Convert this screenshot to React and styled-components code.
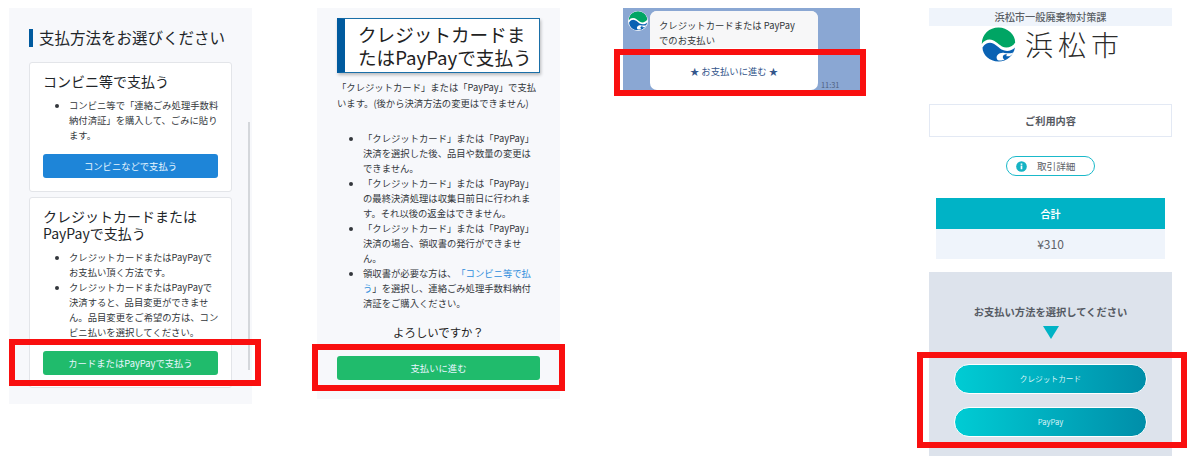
import styled, { createGlobalStyle } from "styled-components"

const Global = createGlobalStyle`
  html, body { margin:0; padding:0; background:#fff; height:460px; overflow:hidden; }
  body {
    font-family:"Noto Sans CJK JP","Noto Sans",sans-serif;
    color:#212529;
    text-spacing-trim:space-all;
    text-autospace:no-autospace;
  }
  * { box-sizing:border-box; }
`
const Page = styled.div`
  display:flex;
  align-items:flex-start;
  width:1189px;
  height:460px;
  padding:8px 0 0 9px;
  overflow:hidden;
`
const Shot = styled.section`
  position:relative;
  flex:none;
  width:243px;
  height:${p => p.$h}px;
  margin-right:${p => p.$gap || 0}px;
  background:${p => p.$bg || "transparent"};
`
const Highlight = styled.div`
  position:absolute;
  left:${p => p.$l}px;
  top:${p => p.$t}px;
  width:${p => p.$w}px;
  height:${p => p.$h}px;
  border:6px solid #f90f0f;
  z-index:3;
`
const Inner = styled.div`
  padding:${p => p.$pad};
`
const Heading = styled.h2`
  margin:0 0 15px;
  height:18px;
  padding-left:6px;
  border-left:4px solid #005a9e;
  font-size:15.5px;
  line-height:17px;
  font-weight:400;
  white-space:nowrap;
`
const Card = styled.div`
  width:203px;
  height:${p => p.$h}px;
  margin-bottom:5px;
  padding:10px 13px 0;
  background:#fff;
  border:1px solid #e3e5e9;
  border-radius:3px;
`
const CardTitle = styled.h3`
  margin:0 0 8px;
  font-size:14px;
  line-height:17px;
  font-weight:400;
`
const List = styled.ul`
  margin:0 ${p => p.$right}px 0 0;
  padding-left:${p => p.$indent}px;
  font-size:9.33px;
  line-height:15px;
  color:#33373b;
  list-style:disc;
`
const Btn = styled.div`
  display:flex;
  align-items:center;
  justify-content:center;
  height:24px;
  margin-top:${p => p.$mt || 0}px;
  border-radius:3px;
  background:${p => p.$color};
  color:#e8f6ff;
  font-size:9.33px;
`
const Scrollbar = styled.div`
  position:absolute;
  left:239px;
  top:114px;
  width:2px;
  height:248px;
  background:#d4d7db;
`
const TitleBox = styled.h1`
  margin:0 0 6px;
  width:203px;
  height:55px;
  padding:3px 0 0 13px;
  background:#fff;
  border:1px solid #1a6fa8;
  border-left:8px solid #005a9e;
  box-shadow:1px 2px 3px rgba(0,0,0,.25);
  font-size:18.6px;
  line-height:23px;
  font-weight:400;
  color:#222;
`
const Lead = styled.p`
  margin:0 0 20px;
  font-size:9.33px;
  line-height:16px;
  color:#33373b;
`
const Link = styled.span`
  color:#2e8ddb;
`
const Ask = styled.p`
  margin:13px 0 16px;
  text-align:center;
  font-size:11.4px;
  line-height:16px;
  color:#222;
`
const Chat = styled.div`
  display:flex;
  align-items:flex-start;
  gap:2px;
  width:237px;
  height:82px;
  padding:3px 0 0 5px;
  background:#8aa7d3;
`
const Avatar = styled.svg`
  flex:none;
  width:20px;
  height:20px;
  border-radius:50%;
  background:#fff;
`
const Bubble = styled.div`
  width:168px;
  height:79px;
  border-radius:7px;
  overflow:hidden;
  background:#fff;
`
const BubbleText = styled.div`
  height:37px;
  padding:7px 0 0 9px;
  background:#f7f7f8;
  font-size:9.33px;
  line-height:15px;
  color:#33373b;
`
const BubbleAction = styled.div`
  padding-top:16px;
  text-align:center;
  font-size:9.33px;
  line-height:14px;
  color:#34568b;
`
const Time = styled.span`
  align-self:flex-end;
  margin:0 0 1px 1px;
  font-size:7.4px;
  line-height:9px;
  color:#4e6180;
`
const Banner = styled.div`
  height:18px;
  background:#eff4fb;
  text-align:center;
  font-size:10.2px;
  line-height:18px;
  font-weight:500;
  color:#5a5f66;
`
const LogoRow = styled.div`
  display:flex;
  align-items:center;
  justify-content:center;
  gap:9px;
  height:36px;
  margin-bottom:42px;
  padding-right:1px;
`
const LogoText = styled.span`
  font-size:28px;
  line-height:36px;
  font-weight:300;
  letter-spacing:5px;
  margin-right:-5px;
  color:#2b2b2b;
`
const UsageBox = styled.div`
  height:33px;
  border:1px solid #e3e9f4;
  text-align:center;
  font-size:10.2px;
  line-height:31px;
  font-weight:700;
  color:#55595f;
`
const PillRow = styled.div`
  display:flex;
  justify-content:center;
  margin:19px 0 22px;
`
const Pill = styled.div`
  display:flex;
  align-items:center;
  gap:10px;
  width:89px;
  height:20px;
  padding-left:9px;
  border:1.5px solid #1ab9ca;
  border-radius:10px;
  font-size:9.6px;
  color:#5d6167;
`
const Total = styled.div`
  margin:0 7px 13px;
`
const TotalHead = styled.div`
  height:31px;
  background:#00b3c6;
  color:#fff;
  text-align:center;
  font-size:10px;
  line-height:31px;
  font-weight:700;
`
const TotalBody = styled.div`
  height:30px;
  background:#eff4fb;
  text-align:center;
  font-size:12px;
  line-height:30px;
  color:#5d6167;
`
const PayPanel = styled.div`
  height:184px;
  padding:33px 25px 0;
  background:#dde3ec;
`
const PayLabel = styled.p`
  margin:0 0 7px;
  text-align:center;
  font-size:10.27px;
  line-height:14px;
  font-weight:700;
  color:#555a63;
  white-space:nowrap;
`
const Arrow = styled.div`
  width:0;
  height:0;
  margin:0 auto 25px;
  border-left:8.5px solid transparent;
  border-right:8.5px solid transparent;
  border-top:13px solid #00b3c6;
`
const PayBtn = styled.div`
  height:30px;
  margin-bottom:13px;
  border:1px solid #fff;
  border-radius:15px;
  background:linear-gradient(90deg,#00ccd4,#008ea9);
  color:#d8f3f6;
  text-align:center;
  font-size:7.7px;
  line-height:28px;
`

const CityMark = ({ size }) => (
  <svg width={size} height={size} viewBox="0 0 34 35" aria-hidden="true">
    <path d="M0.3 17C0.3 7 8 0.5 17 0.5C26 0.5 33.7 7.5 33.7 15.5C31 20 25 22 20.5 19.5C16 16.5 13 12.5 8 12.5C5 12.5 2 14 0.3 17Z" fill="#00a564" />
    <path d="M1 20.5C3 17 6 15.8 8.5 15.8C13 15.8 16 20 20 22.5C25 25 30 24 33.5 20.5C32 28.5 25.5 34.5 17 34.5C8 34.5 1 28 1 20.5Z" fill="#0a62b3" />
    <path d="M16 33C13 29 18 25 23 26C26 26.5 29 26.5 32 25.5C30 29 27 30 24.5 29C26 28 26 27 23.5 27.5C21 28 20.5 31 23 32.5C21 33.5 18 34 16 33Z" fill="#fff" />
  </svg>
)

const App = () => {
  return (
    <>
      <Global />
      <Page>
        <Shot $h={396} $gap={65} $bg="#f7f8fb">
          <Inner $pad="21px 0 0 20px">
            <Heading>支払方法をお選びください</Heading>
            <Card $h={130}>
              <CardTitle>コンビニ等で支払う</CardTitle>
              <List $indent={26} $right={-2}>
                <li>コンビニ等で「連絡ごみ処理手数料納付済証」を購入して、ごみに貼ります。</li>
              </List>
              <Btn $color="#1e85d8" $mt={11}>コンビニなどで支払う</Btn>
            </Card>
            <Card $h={191}>
              <CardTitle>クレジットカードまたはPayPayで支払う</CardTitle>
              <List $indent={26} $right={-2}>
                <li>クレジットカードまたはPayPayでお支払い頂く方法です。</li>
                <li>クレジットカードまたはPayPayで決済すると、品目変更ができません。品目変更をご希望の方は、コンビニ払いを選択してください。</li>
              </List>
              <Btn $color="#20bb6c" $mt={11}>カードまたはPayPayで支払う</Btn>
            </Card>
          </Inner>
          <Scrollbar />
          <Highlight $l={0} $t={331} $w={252} $h={47} />
        </Shot>

        <Shot $h={391} $gap={63} $bg="#f7f8fb">
          <Inner $pad="10px 20px 0">
            <TitleBox>クレジットカードまたはPayPayで支払う</TitleBox>
            <Lead>「クレジットカード」または「PayPay」で支払います。(後から決済方法の変更はできません)</Lead>
            <List $indent={26} $right={5}>
              <li>「クレジットカード」または「PayPay」決済を選択した後、品目や数量の変更はできません。</li>
              <li>「クレジットカード」または「PayPay」の最終決済処理は収集日前日に行われます。それ以後の返金はできません。</li>
              <li>「クレジットカード」または「PayPay」決済の場合、領収書の発行ができません。</li>
              <li>領収書が必要な方は、<Link>「コンビニ等で払</Link><Link>う</Link>」を選択し、連絡ごみ処理手数料納付済証をご購入ください。</li>
            </List>
            <Ask>よろしいですか？</Ask>
            <Btn $color="#20bb6c">支払いに進む</Btn>
          </Inner>
          <Highlight $l={-5} $t={336} $w={253} $h={47} />
        </Shot>

        <Shot $h={82} $gap={63}>
          <Chat>
            <Avatar viewBox="0 0 34 35"><CityMark size={34} /></Avatar>
            <Bubble>
              <BubbleText>クレジットカードまたは PayPay<br />でのお支払い</BubbleText>
              <BubbleAction>★ お支払いに進む ★</BubbleAction>
            </Bubble>
            <Time>11:31</Time>
          </Chat>
          <Highlight $l={-9} $t={41} $w={252} $h={47} />
        </Shot>

        <Shot $h={448}>
          <Banner>浜松市一般廃棄物対策課</Banner>
          <LogoRow>
            <CityMark size={35} />
            <LogoText>浜松市</LogoText>
          </LogoRow>
          <UsageBox>ご利用内容</UsageBox>
          <PillRow>
            <Pill>
              <svg width="11" height="11" viewBox="0 0 12 12" aria-hidden="true">
                <circle cx="6" cy="6" r="5.8" fill="#16b3c4" />
                <rect x="5.1" y="5" width="1.8" height="4" fill="#fff" />
                <rect x="5.1" y="2.7" width="1.8" height="1.5" fill="#fff" />
              </svg>
              取引詳細
            </Pill>
          </PillRow>
          <Total>
            <TotalHead>合計</TotalHead>
            <TotalBody>¥310</TotalBody>
          </Total>
          <PayPanel>
            <PayLabel>お支払い方法を選択してください</PayLabel>
            <Arrow />
            <PayBtn>クレジットカード</PayBtn>
            <PayBtn>PayPay</PayBtn>
          </PayPanel>
          <Highlight $l={-12} $t={344} $w={270} $h={96} />
        </Shot>
      </Page>
    </>
  )
}

export default App
